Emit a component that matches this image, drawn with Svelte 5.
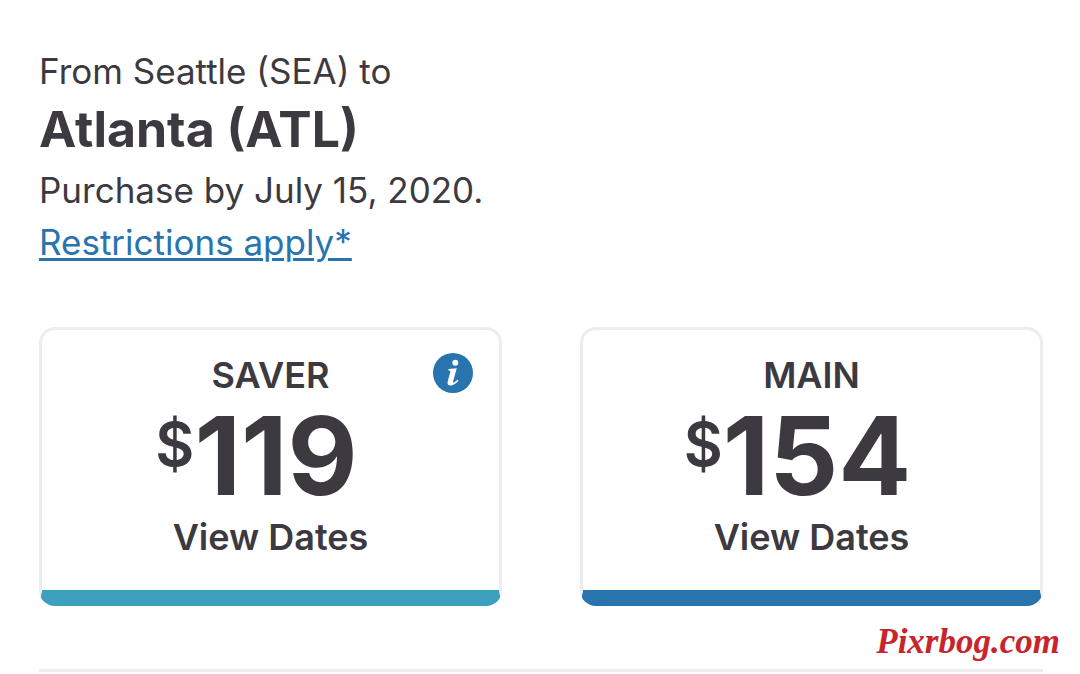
<script>
  let origin = 'Seattle (SEA)';
  let destination = 'Atlanta (ATL)';

  let fares = [
    { name: 'Saver', price: 119, tone: 'teal', info: true },
    { name: 'Main', price: 154, tone: 'blue', info: false }
  ];
</script>

<main class="deal">
  <header>
    <p>From {origin} to</p>
    <h1>{destination}</h1>
    <p>Purchase by July 15, 2020.</p>
    <a href="#restrictions">Restrictions apply*</a>
  </header>

  <div class="fares">
    {#each fares as fare}
      <section class="fare {fare.tone}">
        <h2>{fare.name}</h2>
        <div class="price"><span class="currency">$</span><span>{fare.price}</span></div>
        <a class="dates" href="#dates">View Dates</a>

        {#if fare.info}
          <button type="button" class="info" aria-label="About {fare.name} fares">
            <svg viewBox="0 0 40 40" aria-hidden="true">
              <circle cx="20" cy="20" r="20" fill="#2874ae" />
              <circle cx="22.3" cy="9.8" r="3" fill="#fff" />
              <path d="M15.5 16 23.8 15.2 20.2 28Q19.6 30.4 21.4 29.3L24.6 26.8 25.6 27.7Q21 32.5 17.6 32.5 13.6 32.4 14.8 28L17.3 19Q17.8 17.3 15.3 17.2Z" fill="#fff" />
            </svg>
          </button>
        {/if}
      </section>
    {/each}
  </div>
</main>

<div class="watermark">Pixrbog.com</div>

<style>
  :global(body) {
    margin: 0;
    background: #fff;
  }

  .deal {
    margin: 0 37px 0 39px;
    padding: 45px 0 63px;
    border-bottom: 3px solid #ededee;
    color: #3c3a40;
    font-family: Inter, sans-serif;
  }

  header {
    font-size: 35px;
    line-height: 52px;
  }

  h1,
  h2,
  p {
    margin: 0;
  }

  h1 {
    margin-bottom: 3px;
    font-size: 50px;
    line-height: 64px;
  }

  header a {
    color: #2874ae;
    text-decoration-thickness: 3px;
    text-underline-offset: 3px;
  }

  .fares {
    display: grid;
    grid-template-columns: 1fr 1fr;
    gap: 78px;
    margin-top: 59px;
  }

  .fare {
    position: relative;
    display: flex;
    flex-direction: column;
    align-items: center;
    padding: 21px 0 29px;
    border: 3px solid #ededee;
    border-bottom: 16px solid #3c9fbd;
    border-radius: 16px;
  }

  .blue {
    border-bottom-color: #2874ae;
  }

  h2 {
    font-size: 36px;
    font-weight: 600;
    line-height: 48px;
    text-transform: uppercase;
  }

  .price {
    display: flex;
    align-items: flex-start;
    padding-right: 28px;
    font-size: 108px;
    font-weight: 700;
    line-height: 114px;
  }

  .currency {
    font-size: 60px;
    font-weight: 600;
    line-height: 90px;
  }

  .dates {
    color: inherit;
    font-size: 36px;
    font-weight: 600;
    line-height: 48px;
    text-decoration: none;
  }

  .info {
    position: absolute;
    top: 23px;
    right: 26px;
    width: 40px;
    height: 40px;
    padding: 0;
    border: 0;
    background: none;
    cursor: pointer;
  }

  svg {
    display: block;
    width: 100%;
  }

  .watermark {
    position: absolute;
    right: 20px;
    top: 622px;
    color: #c8252b;
    font: italic bold 35px/40px "Liberation Serif", serif;
  }
</style>
